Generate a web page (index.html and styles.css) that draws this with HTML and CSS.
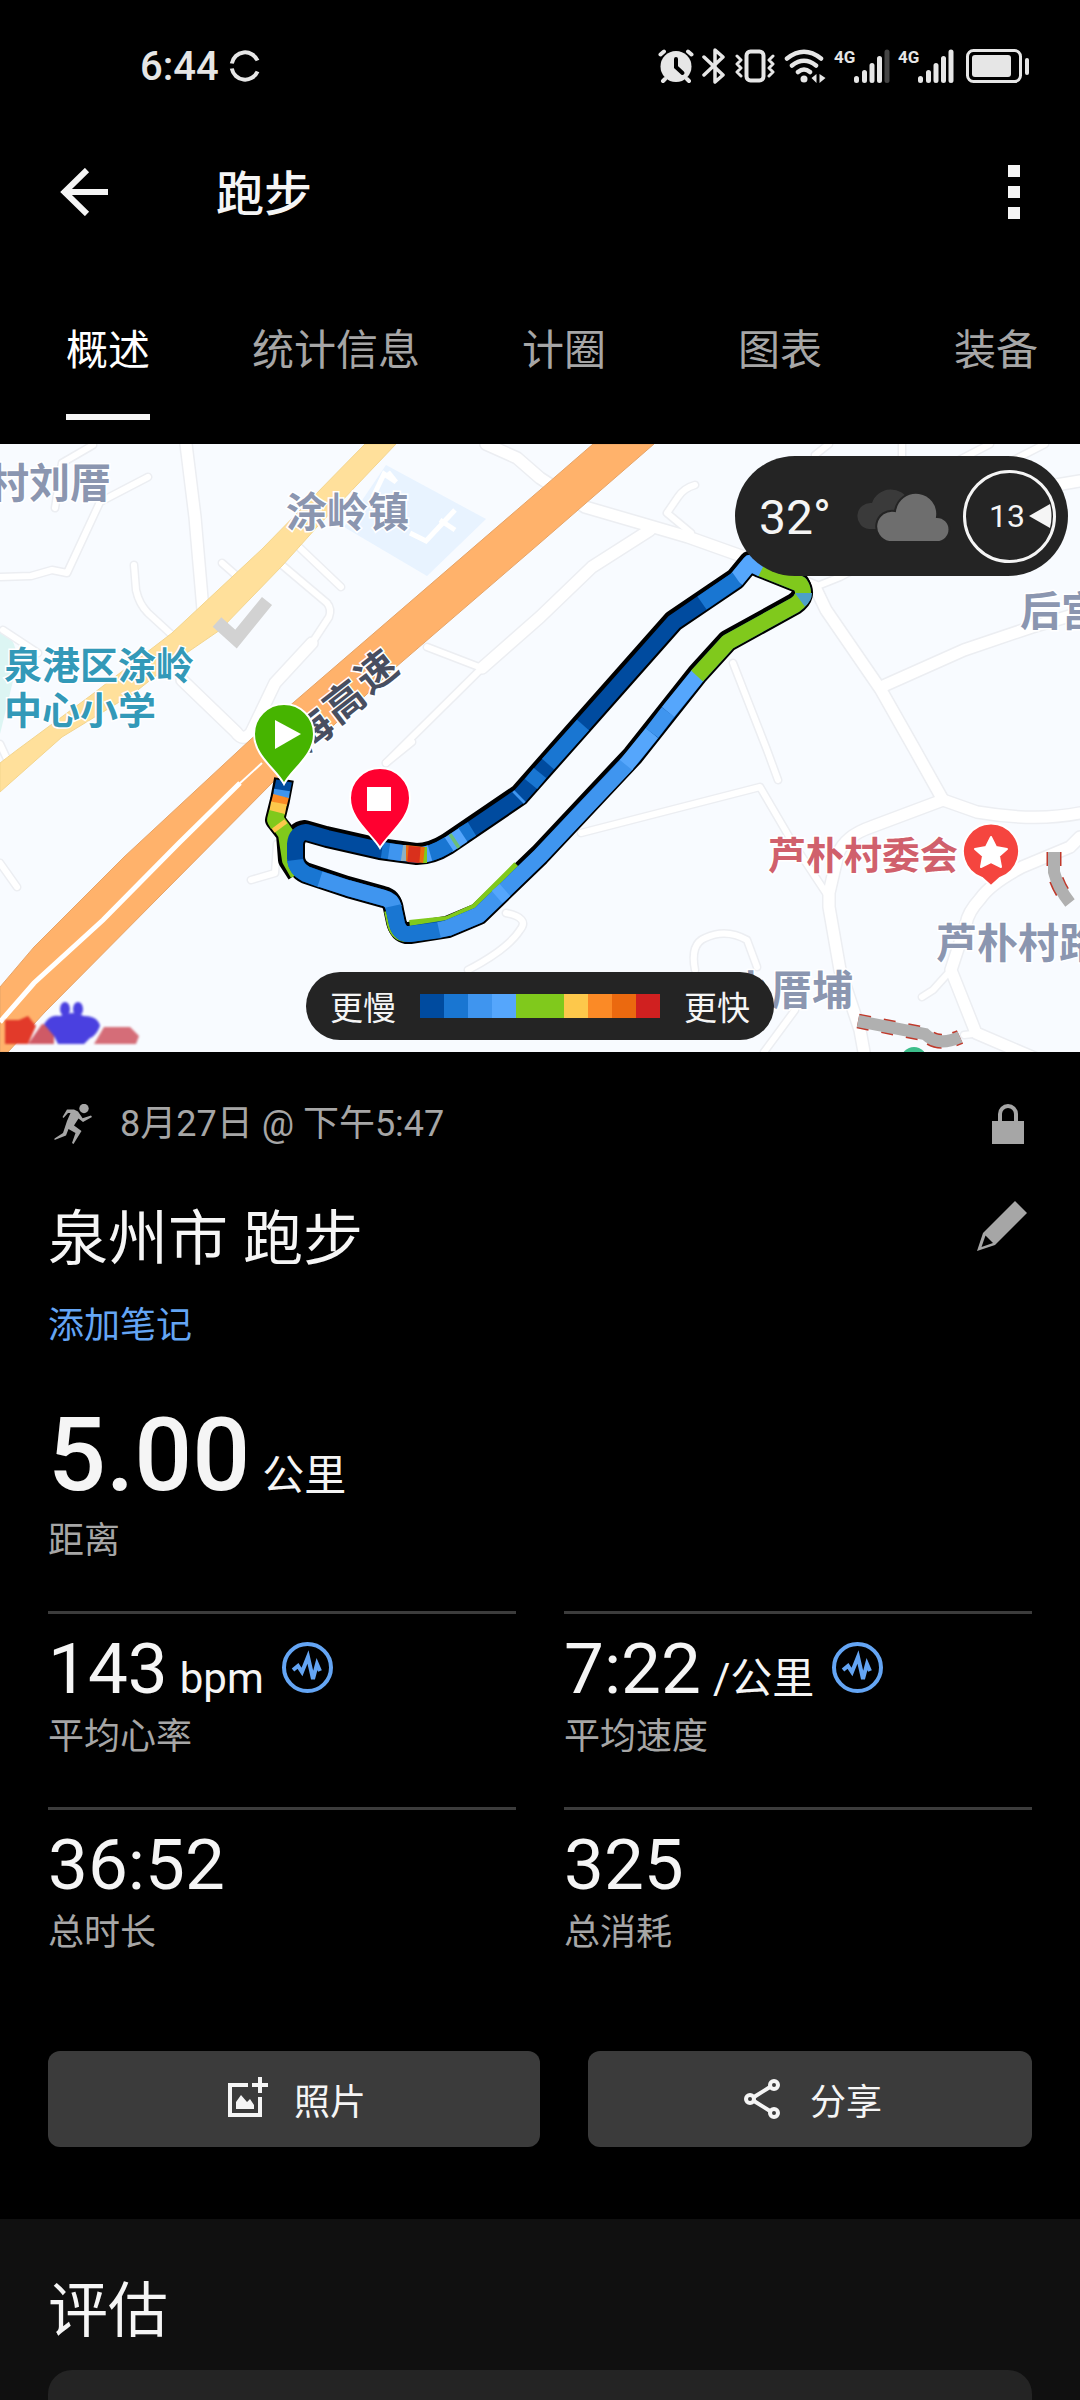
FILE: index.html
```html
<!DOCTYPE html>
<html lang="zh-CN">
<head>
  <meta charset="UTF-8">
  <meta name="viewport" content="width=device-width, initial-scale=1.0">
  <title>跑步</title>
  <link rel="stylesheet" href="styles.css">
</head>
<body>

  <div class="status-bar">
    <div class="status-left">
      <span class="clock">6:44</span>
      <svg width="32" height="32" viewBox="0 0 32 32" fill="none" stroke="#e6e6e6" stroke-width="4">
        <path d="M2.800 13.500A13.500 13.500 0 0 1 28.500 10.500M2.800 18.500A13.500 13.500 0 0 0 28.500 21.500"/>
      </svg>
    </div>
    <div class="status-right">
      <!-- 闹钟 -->
      <svg width="36" height="36" viewBox="0 0 36 36">
        <g stroke="#e6e6e6" stroke-width="4" stroke-linecap="round"><path d="M2.500 6.500L6 3.500M33.500 6.500L30 3.500M7 31L5 33M29 31L31 33"/></g>
        <circle cx="18" cy="18.500" r="15.500" fill="#e6e6e6"/>
        <path d="M18 11v8l6.500 6" fill="none" stroke="#000" stroke-width="4" stroke-linecap="round"/>
      </svg>
      <!-- 蓝牙 -->
      <svg class="bt" width="24" height="36" viewBox="0 0 24 36" fill="none" stroke="#e6e6e6" stroke-width="3.500" stroke-linecap="round" stroke-linejoin="round">
        <path d="M2 9L21 27L13 34V2L21 9L2 27"/>
      </svg>
      <!-- 震动 -->
      <svg class="vib" width="42" height="36" viewBox="0 0 42 36" fill="none" stroke="#e6e6e6" stroke-linejoin="round" stroke-linecap="round">
        <rect x="12.500" y="3.500" width="17" height="29" rx="4" stroke-width="4"/>
        <path d="M3 8l4 4-4 4 4 4-4 4 4 4M39 8l-4 4 4 4-4 4 4 4-4 4" stroke-width="3"/>
      </svg>
      <!-- wifi -->
      <svg class="wifi" width="42" height="36" viewBox="0 0 42 36" fill="none" stroke="#e6e6e6" stroke-width="4.500" stroke-linecap="round">
        <path d="M3 10.500Q20 -3 37 10.500M8 17.500Q20 8 32 17.500M14 24Q20 19 26 24"/>
        <circle cx="20" cy="31" r="3.500" fill="#e6e6e6" stroke="none"/>
        <path d="M32.500 26v9l-5-5zM35.500 35v-9l6 4z" fill="#e6e6e6" stroke="none"/>
      </svg>
      <div class="signal">
        <span>4G</span>
        <svg width="36" height="34" viewBox="0 0 36 34" stroke="#e6e6e6" stroke-width="5" stroke-linecap="round">
          <path d="M2.500 29.500v2M10.500 23.500v8M18 16.500v15M25.500 9.500v22"/><path stroke="#444" d="M33 3v28.500"/>
        </svg>
      </div>
      <div class="signal">
        <span>4G</span>
        <svg width="36" height="34" viewBox="0 0 36 34" stroke="#e6e6e6" stroke-width="5" stroke-linecap="round">
          <path d="M2.500 29.500v2M10.500 23.500v8M18 16.500v15M25.500 9.500v22M33 3v28.500"/>
        </svg>
      </div>
      <!-- 电池 -->
      <svg class="battery" width="64" height="34" viewBox="0 0 64 34">
        <rect x="1.500" y="1.500" width="53" height="31" rx="6" fill="none" stroke="#e6e6e6" stroke-width="3"/>
        <rect x="6" y="6" width="39" height="22" rx="3" fill="#e6e6e6"/>
        <rect x="59" y="9" width="4" height="17" rx="2" fill="#e6e6e6"/>
      </svg>
    </div>
  </div>

  <header class="app-bar">
    <button class="icon-btn" aria-label="返回">
      <svg width="48" height="48" viewBox="0 0 48 48" fill="none" stroke="#f5f5f5" stroke-width="6">
        <path d="M27 2L4.500 24L27 46M4 24H48"/>
      </svg>
    </button>
    <h1>跑步</h1>
    <button class="icon-btn more" aria-label="更多">
      <svg width="12" height="54" viewBox="0 0 12 54" fill="#f5f5f5">
        <path d="M0 0h12v12H0zM0 21h12v12H0zM0 42h12v12H0z"/>
      </svg>
    </button>
  </header>

  <nav class="tabs">
    <a href="#" class="active">概述</a>
    <a href="#">统计信息</a>
    <a href="#">计圈</a>
    <a href="#">图表</a>
    <a href="#">装备</a>
  </nav>

  <div class="map">
    <svg class="map-canvas" viewBox="0 0 1080 608" preserveAspectRatio="xMidYMid slice">
      <defs>
        <g id="minor">
          <path d="M0 133L31 132L52 126L67 129L100 58L148 33"/>
          <path d="M134 121L136 146Q139 160 148 169L172 191"/>
          <path d="M93 1L62 19L55 64"/>
          <path d="M300 104L341 143M222 119L238 133M3 186L38 209"/>
          <path d="M282 121L327 159Q332 165 329 173L312 199"/>
          <path d="M427 203L479 223"/>
          <path d="M695 41Q684 44 678 53L667 69L691 89"/>
          <path d="M815 143L840 133L880 112M829 0L815 11M902 0V12M990 0L940 26M1045 0L1010 18"/>
          <path d="M733 219L767 306L778 336"/>
          <path d="M951 526L933 546L922 553M964 591L981 589"/>
          <path d="M581 389L760 343L791 396L826 449"/>
          <path d="M695 526Q690 500 705 494Q726 484 747 496L757 523"/>
          <path d="M795 566L764 608M0 419L17 443M251 436L275 429L277 400"/>
          <path d="M506 469Q530 474 520 486Q508 505 468 526M412 298L386 319"/>
          <path d="M0 300L14 330"/>
        </g>
        <g id="major">
          <path d="M186 0L195 73L203 166"/>
          <path d="M312 199L275 239L251 289Q243 298 236 288L182 236"/>
          <path d="M486 0L517 14L540 34L585 63L640 79L688 93L747 114L815 143"/>
          <path d="M650 86L592 123L540 173L482 224"/>
          <path d="M815 143L826 166L881 246L915 306L943 356"/>
          <path d="M881 243L964 206L1032 183L1080 169M1050 42L1080 37"/>
          <path d="M943 356L977 368Q1036 378 1080 369"/>
          <path d="M943 356L871 383Q845 392 838 410L829 449V463L840 526L860 586L864 608"/>
          <path d="M1080 393L1070 403L1022 423Q990 440 980 455Q968 468 966 480L951 526L976 589L1039 616"/>
        </g>
        <path id="loop" d="M380 406L327 394L306 388Q296 389 295 400V414Q296 425 306 430L348 444L384 454Q393 456 394 466L397 480Q400 491 410 490L448 484L479 471L540 412L633 313L698 231L728 198L795 161Q808 152 800 140L760 124L750 119L736 136L702 159L674 178L581 283L520 352L448 401Q432 411 417 411Z"/>
      </defs>

      <rect width="1080" height="608" fill="#f8fbff"/>
      <path d="M0 186Q20 195 16 225L0 290Z" fill="#dcf5f3"/>
      <path d="M386 21L486 75L427 132L344 83Z" fill="#e8f3ff"/>
      <g class="road casing">
        <path d="M482 224L386 319" stroke-width="9"/>
        <use href="#minor" stroke-width="9"/><use href="#major" stroke-width="14"/>
      </g>
      <g class="road">
        <path d="M482 224L386 319" stroke-width="6"/>
        <use href="#minor" stroke-width="6"/><use href="#major" stroke-width="11"/>
      </g>
      <path d="M373 53L384 30L396 38L388 28M410 89L426 97L455 66M440 76L455 86" fill="none" stroke="#fff" stroke-width="5"/>

      <!-- 公路 -->
      <path d="M365 0L313 53L262 105L172 189L90 252L17 306L0 319V348L62 293L134 249L172 219L220 186L282 122L317 83L396 0Z" fill="#ffe09b" stroke="#f3d58e"/>
      <path d="M593 0H654L540 99L396 223L275 336L45 568L8 608H0V543L34 503L124 413L250 296L540 46Z" fill="#ffb26b" stroke="#e6a468"/>
      <path d="M240 339L179 399L103 476L34 539L0 578" fill="none" stroke="#fff" stroke-width="5"/>
      <path d="M262 319L238 341" fill="none" stroke="#fff" stroke-width="2"/>

      <!-- 铁路 -->
      <g fill="none">
        <path d="M217 178L236 195L267 157" stroke="#d2d2d2" stroke-width="13"/>
        <path d="M1054 408V428Q1058 444 1070 459" stroke="#c0392b" stroke-width="15" stroke-dasharray="14 14"/>
        <path d="M1054 408V428Q1058 444 1070 459" stroke="#b0b0b0" stroke-width="12"/>
        <path d="M858 577L925 590Q938 603 960 593" stroke="#c0392b" stroke-width="15" stroke-dasharray="12 13"/>
        <path d="M858 577L925 590Q938 603 960 593" stroke="#b0b0b0" stroke-width="12"/>
      </g>
      <circle cx="914" cy="616" r="13" fill="#3dbe8b"/>

      <!-- 地名 -->
      <g class="place">
        <text x="-12" y="54">村刘厝</text>
        <text x="286" y="83">涂岭镇</text>
        <text x="1020" y="182">后宫</text>
        <text x="936" y="514">芦朴村路</text>
        <text x="730" y="561">小厝埔</text>
      </g>
      <g class="place school">
        <text x="4" y="235">泉港区涂岭</text>
        <text x="4" y="280">中心小学</text>
      </g>
      <text class="place village" x="768" y="425">芦朴村委会</text>
      <g class="place highway">
        <text transform="translate(312 286) rotate(-38)" x="-20" y="15">海</text>
        <text transform="translate(344 257) rotate(-38)" x="-20" y="15">高</text>
        <text transform="translate(376 227) rotate(-38)" x="-20" y="15">速</text>
      </g>
      <path d="M991 442L982 434A28 28 0 1 1 1000 434Z" fill="#f5453f" stroke="#fff" stroke-width="2"/>
      <path d="M991 393L996 403L1007 405L999 412L1001 423L991 418L981 423L983 412L975 405L986 403Z" fill="#fff" stroke="#fff" stroke-width="2" stroke-linejoin="round"/>

      <!-- 轨迹 -->
      <g class="track">
        <path d="M284 335L280 356L275 376L286 390L288 416L297 430" stroke="#000" stroke-width="20"/>
        <use href="#loop" stroke="#000" stroke-width="20"/>
        <use href="#loop" x="-1" y="-2" stroke="#000" stroke-width="20"/>
        <path d="M275 374L286 390L290 416L298 430" stroke="#80c91c"/>
        <path d="M284 337L282 347" stroke="#004b9f"/>
        <path d="M282 346L281 353" stroke="#3f95ef"/>
        <path d="M281 352L279 360" stroke="#fb8a26"/>
        <path d="M279 359L277 369" stroke="#fdc84b"/>
        <path d="M277 368L275 376L278 381" stroke="#80c91c"/>
        <path d="M278 380L281 384" stroke="#fdc84b"/>
        <path d="M392 466L395 480Q398 491 408 490M410 484L448 480L477 467L520 424" stroke="#80c91c"/>

        <use href="#loop" stroke="#004b9f"/>
        <path d="M295 416Q296 425 306 430L322 436" stroke="#1976d2"/>
        <path d="M320 435L348 444L384 454Q392 456 394 464" stroke="#3f95ef"/>
        <path d="M393 462L397 480Q400 491 410 490L440 486" stroke="#1976d2"/>
        <path d="M439 486L448 484L479 471L540 412L627 320" stroke="#3f95ef"/>
        <path d="M497 453L505 446" stroke="#55a6fc"/>
        <path d="M626 321L652 289" stroke="#55a6fc"/>
        <path d="M652 289L668 268" stroke="#3f95ef"/>
        <path d="M668 268L698 231" stroke="#55a6fc"/>
        <path d="M697 232L728 198L795 161Q808 152 800 140L760 124" stroke="#80c91c"/>
        <path d="M800 156Q804 153 804 149" stroke="#4da0c8"/>
        <path d="M762 125L750 119L736 136" stroke="#55a6fc"/>
        <path d="M737 135L702 159" stroke="#1976d2"/>
        <path d="M583 281L548 320" stroke="#1976d2"/>
        <path d="M540 329L531 340" stroke="#1976d2"/>
        <path d="M520 352L518 354" stroke="#3f95ef"/>
        <path d="M472 385L462 391" stroke="#1976d2"/>
        <path d="M463 391L448 401" stroke="#55a6fc"/>
        <path d="M456 396L453 398" stroke="#6cbf78"/>
        <path d="M449 400Q440 406 428 410" stroke="#1976d2"/>
        <path d="M430 409L423 411" stroke="#55a6fc"/>
        <path d="M427 411H423" stroke="#80c91c"/>
        <path d="M424 411L405 409" stroke="#eb690f"/>
        <path d="M420 411L408 410" stroke="#d9301c"/>
        <path d="M406 409L401 409" stroke="#8fb0c0"/>
        <path d="M402 409L388 407" stroke="#3f95ef"/>
        <path d="M389 407L382 406" stroke="#1976d2"/>
      </g>

      <!-- 起点 / 终点 -->
      <g stroke="#fff" stroke-width="2">
        <path d="M284 340C276 325 254 312 254 290A30 30 0 0 1 314 290C314 312 292 325 284 340Z" fill="#46b400"/>
        <path d="M380 404C372 390 350 376 350 354A30 30 0 0 1 410 354C410 376 388 390 380 404Z" fill="#ff0030"/>
      </g>
      <path d="M275 276L301 290L275 305Z" fill="#fff"/>
      <rect x="367" y="343" width="24" height="24" fill="#fff"/>

      <!-- 地图标识 -->
      <g class="map-logo">
        <path d="M5 576h14l9-4 8 10-8 18H5z" fill="#e23a2a"/>
        <path d="M28 600L42 580L54 582V600Z" fill="#cf5a66"/>
        <path d="M94 600L104 583H130L139 592L136 600Z" fill="#d56d78"/>
        <ellipse cx="65" cy="565" rx="5" ry="7" fill="#4a40e0"/>
        <ellipse cx="78" cy="565" rx="5" ry="7" fill="#4a40e0"/>
        <path d="M44 580Q50 570 60 572Q72 566 84 572Q98 572 100 582Q96 592 90 594L84 600H58L54 592Z" fill="#4a40e0"/>
      </g>
    </svg>

    <div class="weather">
      <span class="temp">32°</span>
      <svg width="96" height="54" viewBox="0 0 96 54">
        <path d="M14 40A13 13 0 0 1 17 14A20 20 0 0 1 54 12V40Z" fill="#3a3a3a"/>
        <path d="M34 53A15.500 15.500 0 0 1 40 22A21 21 0 0 1 82 28A12.500 12.500 0 0 1 82 53Z" fill="#6e6e6e" stroke="#242424" stroke-width="2"/>
      </svg>
      <div class="wind">
        <span>13</span>
        <svg width="24" height="24" viewBox="0 0 24 24"><path d="M0 12L21 0Q24 12 21 24Z" fill="#f5f5f5"/></svg>
      </div>
    </div>

    <div class="legend">
      <span>更慢</span>
      <div class="scale">
        <i class="c1"></i><i class="c2"></i><i class="c3"></i><i class="c4"></i><i class="c5"></i><i class="c5"></i><i class="c6"></i><i class="c7"></i><i class="c8"></i><i class="c9"></i>
      </div>
      <span>更快</span>
    </div>
  </div>

  <main class="details">
    <div class="meta">
      <svg class="runner" width="40" height="40" viewBox="0 0 40 40" fill="#a6a6a6">
        <circle cx="30" cy="4.500" r="4.700"/>
        <path d="M13 5.500H20L24 7.500L28.600 14.300L37 11.500L38 13L29 18L24.500 14.500L20 21.500L27.500 27L19.500 40L18 39L21.500 29L14.500 25L12 31.500L0.500 36V34.500L9 29L13 17L16.500 9H14L9.500 14L8.500 13Z"/>
      </svg>
      <span>8月27日 @ 下午5:47</span>
      <svg class="lock" width="32" height="42" viewBox="0 0 32 42">
        <path d="M8 20V11A8 8 0 0 1 24 11V20" fill="none" stroke="#a6a6a6" stroke-width="4"/>
        <rect y="18" width="32" height="23" fill="#a6a6a6"/>
      </svg>
    </div>

    <div class="title-row">
      <h2>泉州市 跑步</h2>
      <button class="icon-btn" aria-label="编辑">
        <svg width="50" height="50" viewBox="0 0 50 50">
          <path d="M38 0L50 12L18 44L0 50L6 32Z" fill="#a6a6a6"/>
          <path d="M8.500 34.500L16 42L4.500 46Z" fill="#000"/>
        </svg>
      </button>
    </div>
    <a href="#" class="add-note">添加笔记</a>

    <div class="distance">
      <div class="value"><strong>5.00</strong><span>公里</span></div>
      <div class="label">距离</div>
    </div>

    <div class="stats">
      <div class="stat">
        <div class="value"><b>143</b><span>bpm</span>
          <svg class="wave" viewBox="0 0 51 51"><circle cx="25.500" cy="25.500" r="23.500"/><path d="M11 28L16 24L20 30L26 15L31 37L35 22L38 29"/></svg>
        </div>
        <div class="label">平均心率</div>
      </div>
      <div class="stat">
        <div class="value"><b>7:22</b><span>/公里</span>
          <svg class="wave" viewBox="0 0 51 51"><circle cx="25.500" cy="25.500" r="23.500"/><path d="M11 28L16 24L20 30L26 15L31 37L35 22L38 29"/></svg>
        </div>
        <div class="label">平均速度</div>
      </div>
      <div class="stat">
        <div class="value"><b>36:52</b></div>
        <div class="label">总时长</div>
      </div>
      <div class="stat">
        <div class="value"><b>325</b></div>
        <div class="label">总消耗</div>
      </div>
    </div>
  </main>

  <div class="actions">
    <div class="action">
      <button>
        <svg width="48" height="48" viewBox="0 0 48 48" fill="none" stroke="#f5f5f5" stroke-width="4">
          <path d="M26 10H8V40H38V22M38 2V18M30 10H46"/>
          <path d="M14 34V27L19 20L25 27L28 24L32 30V34Z" fill="#f5f5f5" stroke="none"/>
        </svg>
        照片
      </button>
    </div>
    <div class="action">
      <button>
        <svg width="48" height="48" viewBox="0 0 48 48" fill="none" stroke="#f5f5f5" stroke-width="4">
          <circle cx="12" cy="24" r="4"/><circle cx="36" cy="10" r="4"/><circle cx="36" cy="38" r="4"/>
          <path d="M16 22L32 12M16 26L32 36"/>
        </svg>
        分享
      </button>
    </div>
  </div>

  <section class="evaluate">
    <h2>评估</h2>
    <div class="card"></div>
  </section>

</body>
</html>
```
FILE: styles.css
```css
* {
  margin: 0;
  padding: 0;
  box-sizing: border-box;
}

body {
  background: #000;
  color: #f5f5f5;
  font-family: Roboto, "Noto Sans CJK SC", sans-serif;
  font-size: 36px;
  min-height: 100vh;
  display: flex;
  flex-direction: column;
  overflow-x: hidden;
}

svg {
  display: block;
  flex: none;
}

a {
  text-decoration: none;
}

button {
  font: inherit;
  color: inherit;
  background: none;
  border: none;
  cursor: pointer;
}

h1, h2 {
  font-weight: 400;
}

/* 状态栏 */
.status-bar {
  height: 132px;
  padding: 0 50px 0 140px;
  display: flex;
  align-items: center;
  justify-content: space-between;
  color: #e6e6e6;
}

.status-left, .status-right {
  display: flex;
  align-items: center;
}

.status-left {
  gap: 10px;
}

.clock {
  font-size: 40px;
  font-weight: 500;
}

.bt {
  margin-left: 8px;
}

.vib {
  margin-left: 8px;
}

.wifi {
  margin-left: 8px;
}

.signal {
  display: flex;
  margin-left: 8px;
}

.signal span {
  font-size: 17px;
  font-weight: 700;
  line-height: 16px;
  width: 20px;
  text-align: center;
}

.battery {
  margin-left: 12px;
}

/* 顶栏 */
.app-bar {
  height: 120px;
  padding: 0 60px;
  display: flex;
  align-items: center;
}

.app-bar h1 {
  font-size: 48px;
  font-weight: 500;
  line-height: 60px;
  margin-left: 108px;
  padding-top: 6px;
}

.more {
  margin-left: auto;
}

.tabs {
  display: flex;
  padding: 24px 0;
  overflow: hidden;
}

.tabs a {
  flex: none;
  min-width: 216px;
  height: 144px;
  padding: 0 36px;
  display: flex;
  justify-content: center;
  font-size: 42px;
  line-height: 150px;
  color: #a6a6a6;
}

.tabs a.active {
  color: #fff;
  position: relative;
}

.tabs a.active::after {
  content: "";
  position: absolute;
  left: 66px;
  right: 66px;
  bottom: 0;
  height: 6px;
  background: #f5f5f5;
}

/* 地图 */
.map {
  position: relative;
  height: 608px;
  overflow: hidden;
}

.map-canvas {
  width: 100%;
  height: 100%;
}

.road {
  fill: none;
  stroke: #fff;
  stroke-linejoin: round;
  stroke-linecap: round;
}

.casing {
  stroke: #eceef2;
}

.place {
  font-family: "Noto Sans CJK SC", sans-serif;
  font-size: 41px;
  font-weight: 700;
  fill: #8b96b0;
  stroke: #fff;
  stroke-width: 3px;
  paint-order: stroke;
}

.school {
  font-size: 38px;
  fill: #3399b8;
}

.village {
  font-size: 38px;
  fill: #d0606c;
}

.highway {
  font-size: 40px;
  fill: #484e60;
}

.track {
  fill: none;
  stroke-width: 16px;
  stroke-linejoin: round;
}

.map-logo {
  filter: blur(1px);
}

.weather {
  position: absolute;
  top: 12px;
  right: 12px;
  height: 120px;
  padding: 0 12px 0 24px;
  border-radius: 60px;
  background: #242424;
  display: flex;
  align-items: center;
}

.temp {
  font-size: 48px;
  line-height: 60px;
  padding-top: 4px;
  margin-right: 24px;
}

.wind {
  width: 93px;
  height: 93px;
  margin-left: 12px;
  border: 3px solid #f5f5f5;
  border-radius: 50%;
  display: flex;
  align-items: center;
  justify-content: flex-end;
  gap: 4px;
  font-size: 32px;
}

.legend {
  position: absolute;
  bottom: 12px;
  left: 50%;
  transform: translateX(-50%);
  height: 68px;
  padding: 0 24px;
  border-radius: 34px;
  background: #242424;
  display: flex;
  align-items: center;
  gap: 24px;
  font-size: 33px;
  white-space: nowrap;
}

.scale {
  display: flex;
}

.scale i {
  width: 24px;
  height: 24px;
}

.c1 { background: #004b9f; }
.c2 { background: #1976d2; }
.c3 { background: #3f95ef; }
.c4 { background: #55a6fc; }
.c5 { background: #80c91c; }
.c6 { background: #fdc84b; }
.c7 { background: #fb8a26; }
.c8 { background: #eb690f; }
.c9 { background: #d02020; }

/* 活动详情 */
.details {
  padding: 48px 48px 0;
}

.meta {
  display: flex;
  align-items: center;
  height: 48px;
  padding: 0 8px 0 6px;
  line-height: 52px;
  color: #a6a6a6;
}

.runner {
  margin-right: 26px;
}

.lock {
  margin-left: auto;
}

.title-row {
  display: flex;
  align-items: flex-start;
  justify-content: space-between;
  margin-top: 53px;
  padding-right: 5px;
}

.title-row h2, .evaluate h2 {
  font-size: 60px;
  line-height: 78px;
}

.add-note {
  display: block;
  width: max-content;
  margin-top: 21px;
  line-height: 52px;
  color: #64a5f4;
}

.distance {
  margin-top: 43px;
}

.value {
  display: flex;
  align-items: baseline;
  font-size: 42px;
}

.value span {
  line-height: 48px;
}

.distance strong {
  font-size: 102px;
  font-weight: 500;
  line-height: 120px;
  margin-right: 12px;
}

.label {
  line-height: 52px;
  color: #a6a6a6;
}

.stats {
  display: grid;
  grid-template-columns: 1fr 1fr;
  column-gap: 48px;
  margin-top: 44px;
}

.stat {
  border-top: 3px solid #3c3c3c;
  padding: 13px 0 44px;
}

.stat b {
  font-size: 71px;
  font-weight: 400;
  line-height: 84px;
  margin-right: 12px;
}

.wave {
  width: 51px;
  height: 51px;
  margin-left: 18px;
  fill: none;
  stroke: #64a5f4;
  stroke-width: 4px;
}

/* 按钮 */
.actions {
  display: grid;
  grid-template-columns: 1fr 1fr;
  margin: 48px 0 72px;
}

.action {
  padding-left: 48px;
}

.action:last-child {
  padding-right: 48px;
}

.action button {
  width: 100%;
  height: 96px;
  border-radius: 12px;
  background: #3b3b3b;
  display: flex;
  align-items: center;
  justify-content: center;
  gap: 24px;
}

.evaluate {
  flex: 1;
  display: flex;
  flex-direction: column;
  padding: 54px 48px 0;
  background: #101010;
}

.card {
  flex: 1;
  min-height: 30px;
  margin-top: 19px;
  border-radius: 24px 24px 0 0;
  background: #242424;
}
```
